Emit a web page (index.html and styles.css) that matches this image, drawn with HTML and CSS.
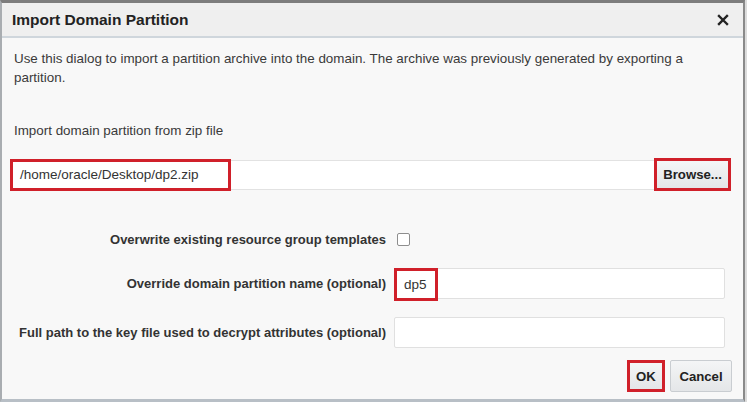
FILE: index.html
```html
<!DOCTYPE html>
<html>
<head>
<meta charset="utf-8">
<link rel="stylesheet" href="styles.css">
</head>
<body>
<div class="dialog">
  <div class="header">
    <span class="title">Import Domain Partition</span>
    <svg class="close" viewBox="0 0 12 12" width="12" height="12"><path d="M2 2 L10 10 M10 2 L2 10" stroke="#222" stroke-width="2.4" stroke-linecap="square"/></svg>
  </div>
  <div class="body">
    <p class="desc">Use this dialog to import a partition archive into the domain. The archive was previously generated by exporting a partition.</p>
    <div class="ziplabel">Import domain partition from zip file</div>
    <div class="filerow">
      <div class="filefield"><span class="hl hl-path">/home/oracle/Desktop/dp2.zip</span></div>
      <button class="btn hlb btn-browse">Browse...</button>
    </div>
    <div class="form">
      <div class="label">Overwrite existing resource group templates</div>
      <div class="ctrl ctrl-check"><span class="checkbox"></span></div>
      <div class="label">Override domain partition name (optional)</div>
      <div class="ctrl"><div class="field"><span class="hl hl-dp">dp5</span></div></div>
      <div class="label">Full path to the key file used to decrypt attributes (optional)</div>
      <div class="ctrl"><div class="field"></div></div>
    </div>
    <div class="actions">
      <button class="btn hlb btn-ok">OK</button>
      <button class="btn btn-cancel">Cancel</button>
    </div>
  </div>
</div>
</body>
</html>
```

FILE: styles.css
```css
html, body {
  margin: 0;
  padding: 0;
  background: #dcdcdc;
}
body {
  width: 747px;
  height: 402px;
  overflow: hidden;
  font-family: "Liberation Sans", Arial, Helvetica, sans-serif;
  color: #333;
}
.dialog {
  box-sizing: border-box;
  width: 745px;
  height: 402px;
  border-top: 3px solid #7d7d7d;
  border-left: 2px solid #a9adb1;
  border-right: 2px solid #8a8a8a;
  border-bottom: 3px solid #b8bfc6;
  background: #f8f8f8;
  display: flex;
  flex-direction: column;
}
.header {
  height: 33px;
  background: #efefef;
  border-bottom: 2px solid #cfd6dc;
  display: flex;
  align-items: center;
  justify-content: space-between;
  padding: 0 14px 0 10px;
}
.title {
  font-size: 15.5px;
  font-weight: bold;
  color: #222;
}
.close { display: block; }
.body {
  padding: 0 0 0 8px;
  flex: 1;
  display: flex;
  flex-direction: column;
}
.desc {
  margin: 11px 40px 0 4px;
  font-size: 13.4px;
  line-height: 19px;
  color: #3a3a3a;
}
.ziplabel {
  margin: 36px 0 0 4px;
  font-size: 13.4px;
  line-height: 16px;
  color: #3a3a3a;
}
.filerow {
  margin-top: 19px;
  display: flex;
  align-items: center;
  height: 33px;
}
.filefield {
  width: 644px;
  height: 30px;
  background: #fff;
  border-top: 1px solid #e2e2e2;
  border-bottom: 1px solid #e2e2e2;
  box-sizing: border-box;
  display: flex;
  align-items: stretch;
}
.hl {
  border: 3px solid #d0202a;
  display: flex;
  align-items: center;
  box-sizing: border-box;
  font-size: 13.5px;
  color: #333;
}
.hl-path {
  width: 221px;
  margin: -2px 0 -2px 0;
  padding-left: 7px;
}
.btn {
  font-family: "Liberation Sans", Arial, sans-serif;
  font-weight: bold;
  font-size: 13.2px;
  color: #222;
  background: linear-gradient(#f4f5f6, #e4e6e8);
  border: 1px solid #c9cdd1;
  border-radius: 2px;
  padding: 0;
  box-sizing: border-box;
  height: 32px;
}
.hlb {
  border: 3px solid #d0202a;
  border-radius: 0;
}
.btn-browse {
  width: 77px;
  height: 33px;
}
.form {
  margin-top: 37px;
  display: grid;
  grid-template-columns: 376px 331px;
  column-gap: 8px;
  row-gap: 18px;
  align-items: center;
}
.label {
  text-align: right;
  font-weight: bold;
  font-size: 13px;
  color: #333;
}
.ctrl {
  display: flex;
  align-items: center;
}
.ctrl-check { height: 22px; }
.checkbox {
  width: 11px;
  height: 11px;
  border: 1px solid #8e8e8e;
  border-radius: 2px;
  background: #fff;
  margin-left: 3px;
}
.field {
  width: 331px;
  height: 31px;
  background: #fff;
  border: 1px solid #e0e0e0;
  border-radius: 2px;
  box-sizing: border-box;
  display: flex;
}
.hl-dp {
  width: 44px;
  margin: -1px 0 -3px -1px;
  padding-left: 7px;
  font-size: 13.5px;
}
.actions {
  margin-top: 12px;
  display: flex;
  justify-content: flex-end;
  gap: 5px;
  padding-right: 11px;
}
.btn-ok { width: 38px; }
.btn-cancel { width: 62px; }
```
